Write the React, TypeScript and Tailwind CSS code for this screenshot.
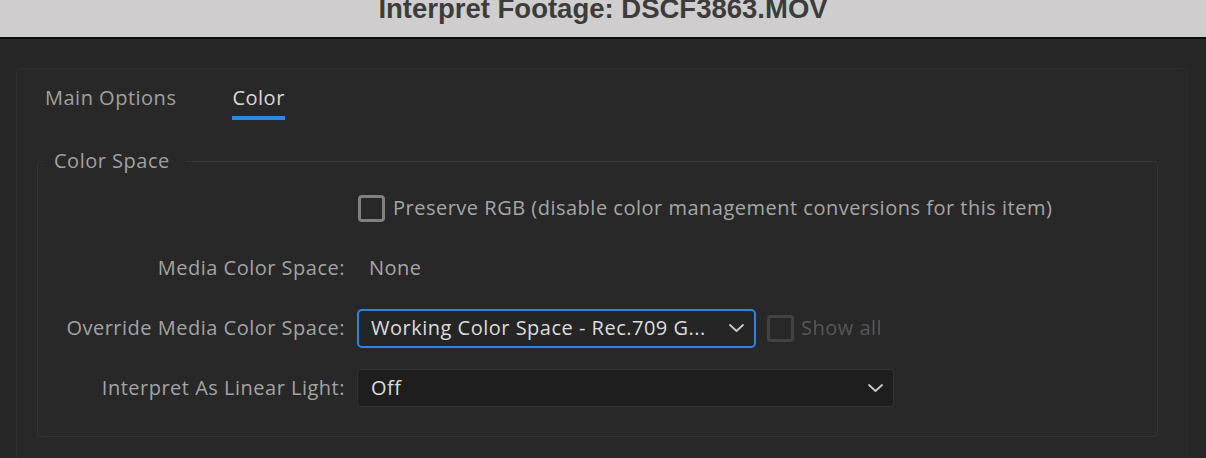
import * as React from "react";

const Chevron: React.FC = () => (
  <svg width="15" height="8" viewBox="0 0 15 8" fill="none" className="shrink-0">
    <polyline points="1,1 7.5,7 14,1" stroke="#c9c9c9" strokeWidth="1.8" strokeLinecap="round" strokeLinejoin="round" />
  </svg>
);

interface RowProps {
  label?: string;
  children: React.ReactNode;
}

const Row: React.FC<RowProps> = ({ label, children }) => (
  <div className="flex items-center h-[40px]">
    <div className="w-[307px] shrink-0 text-right text-[#a3a3a3] whitespace-nowrap">{label}</div>
    <div className="flex items-center ml-[12px]">{children}</div>
  </div>
);

export default function App() {
  return (
    <div
      className="w-[1206px] h-[458px] overflow-hidden bg-[#272727] text-[20px] leading-[24px] tracking-[0.5px]"
      style={{ fontFamily: "'Open Sans', 'Noto Sans', sans-serif" }}
    >
      {/* window title */}
      <div className="h-[39px] bg-[#cfcdcd] border-b-[2px] border-[#0b0b0b] flex justify-center overflow-hidden">
        <div
          className="-mt-[5px] text-[27.5px] leading-none font-bold tracking-normal text-[#3c3c3c] whitespace-nowrap"
          style={{ fontFamily: "'Liberation Sans', Arial, sans-serif" }}
        >
          Interpret Footage: DSCF3863.MOV
        </div>
      </div>

      <div className="mt-[29px] ml-[16px] mr-[19px] border border-[#303030] rounded-t-[5px] bg-[#282828] pt-[17px] pb-[60px]">
        {/* tabs */}
        <div className="flex items-start pl-[28px] gap-[56px]">
          <div className="text-[#a0a0a0]">Main Options</div>
          <div className="flex flex-col">
            <span className="text-[#d8d8d8]">Color</span>
            <span className="mt-[6px] h-[4px] bg-[#2f86e6]" />
          </div>
        </div>

        <fieldset className="mt-[29px] ml-[20px] mr-[28px] border border-[#353535] rounded-[4px] pt-[15px] pb-[28px]">
          <legend className="ml-[6px] pl-[10px] pr-[16px] text-[#a0a0a0]">Color Space</legend>

          <div className="flex flex-col gap-[20px]">
            <Row>
              <div className="flex items-center ml-[1px]">
                <span className="w-[27px] h-[27px] border-[3px] border-[#808080] rounded-[4px]" />
                <span className="ml-[8px] text-[#a6a6a6] whitespace-nowrap">
                  Preserve RGB (disable color management conversions for this item)
                </span>
              </div>
            </Row>

            <Row label="Media Color Space:">
              <span className="pl-[12px] text-[#a6a6a6]">None</span>
            </Row>

            <Row label="Override Media Color Space:">
              <div className="w-[399px] h-[39px] border-2 border-[#3083e2] rounded-[5px] bg-[#252525] flex items-center justify-between pl-[12px] pr-[10px]">
                <span className="text-[#dcdcdc] whitespace-nowrap">Working Color Space - Rec.709 G...</span>
                <Chevron />
              </div>
              <span className="ml-[11px] w-[27px] h-[27px] border-[3px] border-[#434343] rounded-[4px]" />
              <span className="ml-[7px] text-[#575757]">Show all</span>
            </Row>

            <Row label="Interpret As Linear Light:">
              <div className="w-[537px] h-[38px] border border-[#333333] rounded-[4px] bg-[#1e1e1e] flex items-center justify-between pl-[13px] pr-[10px]">
                <span className="text-[#dcdcdc]">Off</span>
                <Chevron />
              </div>
            </Row>
          </div>
        </fieldset>
      </div>
    </div>
  );
}
